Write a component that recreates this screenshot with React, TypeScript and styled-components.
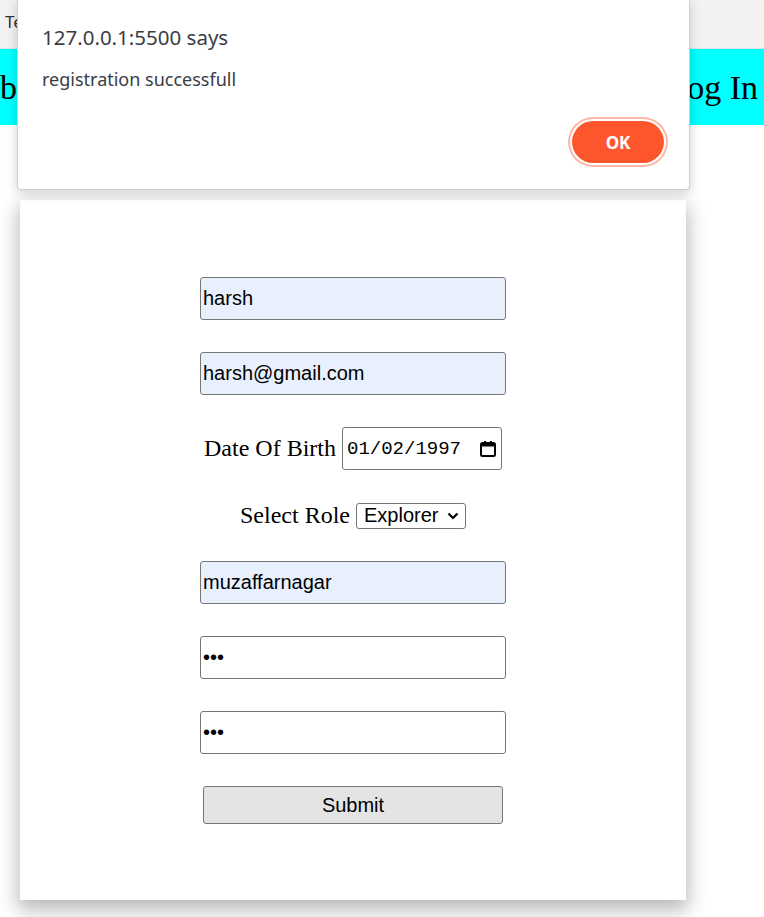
import React from "react";
import styled, { createGlobalStyle } from "styled-components";

const Global = createGlobalStyle`
  html, body { margin: 0; padding: 0; background: #ffffff; }
  body { font-family: "Liberation Serif", "Times New Roman", serif; }
  * { box-sizing: border-box; }
`;

const Screen = styled.div`
  position: relative;
  width: 764px;
  height: 917px;
  overflow: hidden;
  background: #ffffff;
`;

const TabStrip = styled.div`
  height: 49px;
  background: #f2f2f2;
  border-bottom: 1px solid #e2e2e2;
  display: flex;
  align-items: center;
  padding: 0 0 5px 5px;
  font-family: "Noto Sans", "Open Sans", sans-serif;
  font-size: 17px;
  color: #333;
`;

const NavBar = styled.nav`
  height: 76px;
  background: #00ffff;
  display: flex;
  align-items: center;
  justify-content: space-between;
  padding: 0 6px 0 0;
  font-family: "Liberation Serif", "Times New Roman", serif;
  font-size: 34px;
  color: #000;
`;

const NavItem = styled.span`
  line-height: 1;
  padding-top: 2px;
`;

const Page = styled.main`
  padding: 75px 0 0 20px;
`;

const Card = styled.form`
  width: 666px;
  height: 700px;
  background: #ffffff;
  box-shadow: 0 8px 18px 2px rgba(0, 0, 0, 0.28);
  padding-top: 77px;
  display: flex;
  flex-direction: column;
  align-items: center;
  gap: 32px;
`;

const TextInput = styled.input<{ $filled?: boolean }>`
  width: 306px;
  height: 43px;
  border: 1px solid #767676;
  border-radius: 3px;
  padding: 1px 2px;
  font-family: "Liberation Sans", Arial, sans-serif;
  font-size: 20px;
  color: #000;
  background: ${(p) => (p.$filled ? "#e8f0fe" : "#ffffff")};
  outline: none;
`;

const Row = styled.div<{ $h: number }>`
  height: ${(p) => p.$h}px;
  display: flex;
  align-items: center;
  justify-content: center;
  gap: 6px;
  font-family: "Liberation Serif", "Times New Roman", serif;
  font-size: 24px;
  color: #000;
`;

const DateBox = styled.div`
  width: 160px;
  height: 43px;
  border: 1px solid #767676;
  border-radius: 3px;
  display: flex;
  align-items: center;
  justify-content: space-between;
  padding: 0 4px 0 4px;
  font-family: "Liberation Mono", "DejaVu Sans Mono", monospace;
  font-size: 19px;
  color: #000;
`;

const SelectBox = styled.div`
  width: 110px;
  height: 26px;
  border: 1px solid #767676;
  border-radius: 3px;
  display: flex;
  align-items: center;
  justify-content: space-between;
  padding: 0 6px 0 7px;
  font-family: "Liberation Sans", Arial, sans-serif;
  font-size: 20px;
  color: #000;
`;

const SubmitButton = styled.button`
  width: 300px;
  height: 38px;
  background: #e4e4e4;
  border: 1px solid #767676;
  border-radius: 3px;
  font-family: "Liberation Sans", Arial, sans-serif;
  font-size: 20px;
  color: #000;
  padding: 0;
`;

const Dialog = styled.div`
  position: absolute;
  top: 0;
  left: 17px;
  width: 673px;
  height: 190px;
  background: #ffffff;
  border: 1px solid #d0d0d0;
  border-top: none;
  border-radius: 0 0 4px 4px;
  box-shadow: 0 3px 12px rgba(0, 0, 0, 0.18);
  padding: 23px 25px 0 24px;
  display: flex;
  flex-direction: column;
  font-family: "Noto Sans", "Open Sans", sans-serif;
  color: #3a3d45;
`;

const DialogTitle = styled.div`
  font-size: 20.5px;
  line-height: 28px;
`;

const DialogMessage = styled.div`
  margin-top: 16px;
  font-size: 18px;
  line-height: 24px;
`;

const DialogActions = styled.div`
  margin-top: auto;
  margin-bottom: 26px;
  display: flex;
  justify-content: flex-end;
`;

const OkButton = styled.button`
  width: 92px;
  height: 42px;
  border: none;
  border-radius: 21px;
  background: #fe562c;
  color: #ffffff;
  font-family: "Noto Sans", "Open Sans", sans-serif;
  font-weight: 700;
  font-size: 17px;
  box-shadow: 0 0 0 2px #ffffff, 0 0 0 4px #fcb8a6;
  padding: 0;
`;

const CalendarIcon = () => (
  <svg width="18" height="18" viewBox="0 0 18 18">
    <rect x="2" y="3" width="14" height="13" rx="1.5" fill="none" stroke="#000" strokeWidth="2" />
    <rect x="2" y="3" width="14" height="3.5" fill="#000" />
    <rect x="5" y="1" width="2" height="3" fill="#000" />
    <rect x="11" y="1" width="2" height="3" fill="#000" />
  </svg>
);

const Chevron = () => (
  <svg width="12" height="8" viewBox="0 0 12 8">
    <path d="M1.5 1.5 L6 6 L10.5 1.5" fill="none" stroke="#000" strokeWidth="2.2" />
  </svg>
);

export default function App() {
  return (
    <Screen>
      <Global />
      <TabStrip>Te</TabStrip>
      <NavBar>
        <NavItem>bo</NavItem>
        <NavItem>Log In</NavItem>
      </NavBar>
      <Page>
        <Card onSubmit={(e) => e.preventDefault()}>
          <TextInput $filled defaultValue="harsh" />
          <TextInput $filled defaultValue="harsh@gmail.com" />
          <Row $h={43}>
            <span>Date Of Birth</span>
            <DateBox>
              <span>01/02/1997</span>
              <CalendarIcon />
            </DateBox>
          </Row>
          <Row $h={27}>
            <span>Select Role</span>
            <SelectBox>
              <span>Explorer</span>
              <Chevron />
            </SelectBox>
          </Row>
          <TextInput $filled defaultValue="muzaffarnagar" />
          <TextInput type="password" defaultValue="abc" />
          <TextInput type="password" defaultValue="abc" />
          <SubmitButton type="submit">Submit</SubmitButton>
        </Card>
      </Page>
      <Dialog role="alertdialog">
        <DialogTitle>127.0.0.1:5500 says</DialogTitle>
        <DialogMessage>registration successfull</DialogMessage>
        <DialogActions>
          <OkButton>OK</OkButton>
        </DialogActions>
      </Dialog>
    </Screen>
  );
}
